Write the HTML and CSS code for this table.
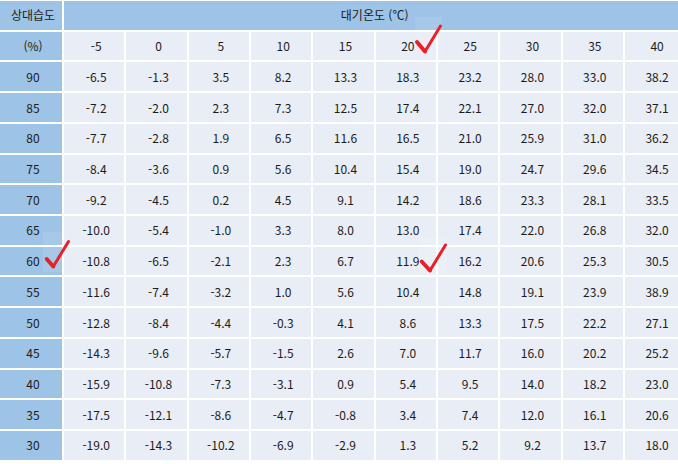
FILE: index.html
```html
<!DOCTYPE html>
<html lang="ko">
<head>
<meta charset="utf-8">
<link rel="stylesheet" href="styles.css">
</head>
<body>
<div class="sheet">
  <div class="grid">
    <div class="cell head">상대습도</div>
    <div class="cell head span">대기온도 (℃)</div>
    <div class="cell head">(%)</div>
    <div class="cell">-5</div><div class="cell">0</div><div class="cell">5</div><div class="cell">10</div><div class="cell">15</div><div class="cell">20</div><div class="cell">25</div><div class="cell">30</div><div class="cell">35</div><div class="cell">40</div>
    <div class="cell head">90</div><div class="cell">-6.5</div><div class="cell">-1.3</div><div class="cell">3.5</div><div class="cell">8.2</div><div class="cell">13.3</div><div class="cell">18.3</div><div class="cell">23.2</div><div class="cell">28.0</div><div class="cell">33.0</div><div class="cell">38.2</div>
    <div class="cell head">85</div><div class="cell">-7.2</div><div class="cell">-2.0</div><div class="cell">2.3</div><div class="cell">7.3</div><div class="cell">12.5</div><div class="cell">17.4</div><div class="cell">22.1</div><div class="cell">27.0</div><div class="cell">32.0</div><div class="cell">37.1</div>
    <div class="cell head">80</div><div class="cell">-7.7</div><div class="cell">-2.8</div><div class="cell">1.9</div><div class="cell">6.5</div><div class="cell">11.6</div><div class="cell">16.5</div><div class="cell">21.0</div><div class="cell">25.9</div><div class="cell">31.0</div><div class="cell">36.2</div>
    <div class="cell head">75</div><div class="cell">-8.4</div><div class="cell">-3.6</div><div class="cell">0.9</div><div class="cell">5.6</div><div class="cell">10.4</div><div class="cell">15.4</div><div class="cell">19.0</div><div class="cell">24.7</div><div class="cell">29.6</div><div class="cell">34.5</div>
    <div class="cell head">70</div><div class="cell">-9.2</div><div class="cell">-4.5</div><div class="cell">0.2</div><div class="cell">4.5</div><div class="cell">9.1</div><div class="cell">14.2</div><div class="cell">18.6</div><div class="cell">23.3</div><div class="cell">28.1</div><div class="cell">33.5</div>
    <div class="cell head">65</div><div class="cell">-10.0</div><div class="cell">-5.4</div><div class="cell">-1.0</div><div class="cell">3.3</div><div class="cell">8.0</div><div class="cell">13.0</div><div class="cell">17.4</div><div class="cell">22.0</div><div class="cell">26.8</div><div class="cell">32.0</div>
    <div class="cell head">60</div><div class="cell">-10.8</div><div class="cell">-6.5</div><div class="cell">-2.1</div><div class="cell">2.3</div><div class="cell">6.7</div><div class="cell">11.9</div><div class="cell">16.2</div><div class="cell">20.6</div><div class="cell">25.3</div><div class="cell">30.5</div>
    <div class="cell head">55</div><div class="cell">-11.6</div><div class="cell">-7.4</div><div class="cell">-3.2</div><div class="cell">1.0</div><div class="cell">5.6</div><div class="cell">10.4</div><div class="cell">14.8</div><div class="cell">19.1</div><div class="cell">23.9</div><div class="cell">38.9</div>
    <div class="cell head">50</div><div class="cell">-12.8</div><div class="cell">-8.4</div><div class="cell">-4.4</div><div class="cell">-0.3</div><div class="cell">4.1</div><div class="cell">8.6</div><div class="cell">13.3</div><div class="cell">17.5</div><div class="cell">22.2</div><div class="cell">27.1</div>
    <div class="cell head">45</div><div class="cell">-14.3</div><div class="cell">-9.6</div><div class="cell">-5.7</div><div class="cell">-1.5</div><div class="cell">2.6</div><div class="cell">7.0</div><div class="cell">11.7</div><div class="cell">16.0</div><div class="cell">20.2</div><div class="cell">25.2</div>
    <div class="cell head">40</div><div class="cell">-15.9</div><div class="cell">-10.8</div><div class="cell">-7.3</div><div class="cell">-3.1</div><div class="cell">0.9</div><div class="cell">5.4</div><div class="cell">9.5</div><div class="cell">14.0</div><div class="cell">18.2</div><div class="cell">23.0</div>
    <div class="cell head">35</div><div class="cell">-17.5</div><div class="cell">-12.1</div><div class="cell">-8.6</div><div class="cell">-4.7</div><div class="cell">-0.8</div><div class="cell">3.4</div><div class="cell">7.4</div><div class="cell">12.0</div><div class="cell">16.1</div><div class="cell">20.6</div>
    <div class="cell head">30</div><div class="cell">-19.0</div><div class="cell">-14.3</div><div class="cell">-10.2</div><div class="cell">-6.9</div><div class="cell">-2.9</div><div class="cell">1.3</div><div class="cell">5.2</div><div class="cell">9.2</div><div class="cell">13.7</div><div class="cell">18.0</div>
  </div>
  <svg class="marks" width="678" height="464" viewBox="0 0 678 464">
    <rect x="415" y="17" width="27" height="48" fill="#ffffff" fill-opacity="0.1"/>
    <rect x="43" y="232" width="24" height="40" fill="#ffffff" fill-opacity="0.1"/>
    <rect x="419" y="238" width="28" height="36" fill="#ffffff" fill-opacity="0.12"/>
    <g fill="none" stroke="#e8202a" stroke-linecap="round" stroke-linejoin="round">
      <path d="M417 42 L425 51.5" stroke-width="4"/>
      <path d="M425 51.5 L440.5 26" stroke-width="3"/>
      <path d="M46.7 259 L53.3 266.5" stroke-width="4"/>
      <path d="M53.3 266.5 L68.5 241.5" stroke-width="3"/>
      <path d="M421.7 261.5 L430 270.5" stroke-width="4"/>
      <path d="M430 270.5 L445.5 245" stroke-width="3"/>
    </g>
  </svg>
</div>
</body>
</html>
```
FILE: styles.css
```css
html, body {
  margin: 0;
  padding: 0;
  background: #ffffff;
  overflow: hidden;
}
.sheet {
  position: relative;
  width: 678px;
  height: 464px;
  overflow: hidden;
}
.grid {
  display: grid;
  grid-template-columns: 62px repeat(10, 60.33px);
  grid-template-rows: repeat(15, 28.73px);
  gap: 2px;
  padding-top: 1px;
  width: 685px;
  font-family: "Noto Sans CJK KR", "Noto Sans", sans-serif;
  font-size: 12px;
  color: #1c1c1c;
}
.cell {
  background: #e9edf5;
  display: flex;
  align-items: center;
  justify-content: center;
  padding-left: 4px;
  line-height: 1;
}
.head {
  background: #9dc3e6;
}
.span {
  grid-column: span 10;
  padding-left: 0;
}
.marks {
  position: absolute;
  top: 0;
  left: 0;
  pointer-events: none;
}
```
